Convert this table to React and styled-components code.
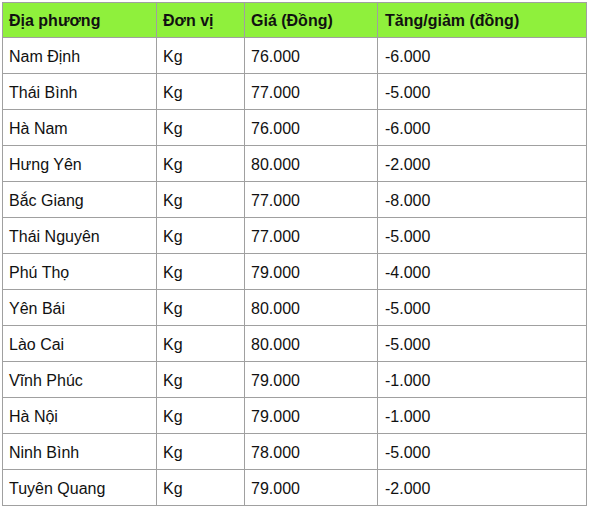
import styled, { createGlobalStyle } from "styled-components";

const GlobalStyle = createGlobalStyle`
  html, body {
    margin: 0;
    padding: 0;
    background: #ffffff;
  }
  body {
    font-family: "Liberation Sans", Arial, sans-serif;
  }
`;

const rows = [
    ["Nam Định", "Kg", "76.000", "-6.000"],
    ["Thái Bình", "Kg", "77.000", "-5.000"],
    ["Hà Nam", "Kg", "76.000", "-6.000"],
    ["Hưng Yên", "Kg", "80.000", "-2.000"],
    ["Bắc Giang", "Kg", "77.000", "-8.000"],
    ["Thái Nguyên", "Kg", "77.000", "-5.000"],
    ["Phú Thọ", "Kg", "79.000", "-4.000"],
    ["Yên Bái", "Kg", "80.000", "-5.000"],
    ["Lào Cai", "Kg", "80.000", "-5.000"],
    ["Vĩnh Phúc", "Kg", "79.000", "-1.000"],
    ["Hà Nội", "Kg", "79.000", "-1.000"],
    ["Ninh Bình", "Kg", "78.000", "-5.000"],
    ["Tuyên Quang", "Kg", "79.000", "-2.000"],
];

const widths = [154, 88, 133, 209];

function App() {
    return (
        <>
            <GlobalStyle />
            <Wrapper>
                <PriceTable>
                    <colgroup>
                        {widths.map((w, i) => <col key={i} style={{ width: w }} />)}
                    </colgroup>
                    <thead>
                        <tr>
                            <HeadCell>Địa phương</HeadCell>
                            <HeadCell>Đơn vị</HeadCell>
                            <HeadCell>Giá (Đồng)</HeadCell>
                            <HeadCell $wide>Tăng/giảm (đồng)</HeadCell>
                        </tr>
                    </thead>
                    <tbody>
                        {rows.map((r) => (
                            <tr key={r[0]}>
                                <Cell>{r[0]}</Cell>
                                <Cell>{r[1]}</Cell>
                                <Cell>{r[2]}</Cell>
                                <Cell $wide>{r[3]}</Cell>
                            </tr>
                        ))}
                    </tbody>
                </PriceTable>
            </Wrapper>
        </>
    );
}

const Wrapper = styled.div`
    padding: 2px 0 0 2px;
`;

const PriceTable = styled.table`
    border-collapse: collapse;
    table-layout: fixed;
    width: 585px;
    font-size: 16px;
    color: #111;
`;

const HeadCell = styled.th`
    height: 35px;
    padding: 1px 0 0 ${(p) => (p.$wide ? "7px" : "6px")};
    box-sizing: border-box;
    background: #8ff03c;
    border: 1px solid #a0a0a0;
    text-align: left;
    font-weight: bold;
    vertical-align: middle;
`;

const Cell = styled.td`
    height: 36px;
    padding: 2px 0 0 ${(p) => (p.$wide ? "7px" : "6px")};
    box-sizing: border-box;
    border: 1px solid #a0a0a0;
    vertical-align: middle;
`;

export default App;
